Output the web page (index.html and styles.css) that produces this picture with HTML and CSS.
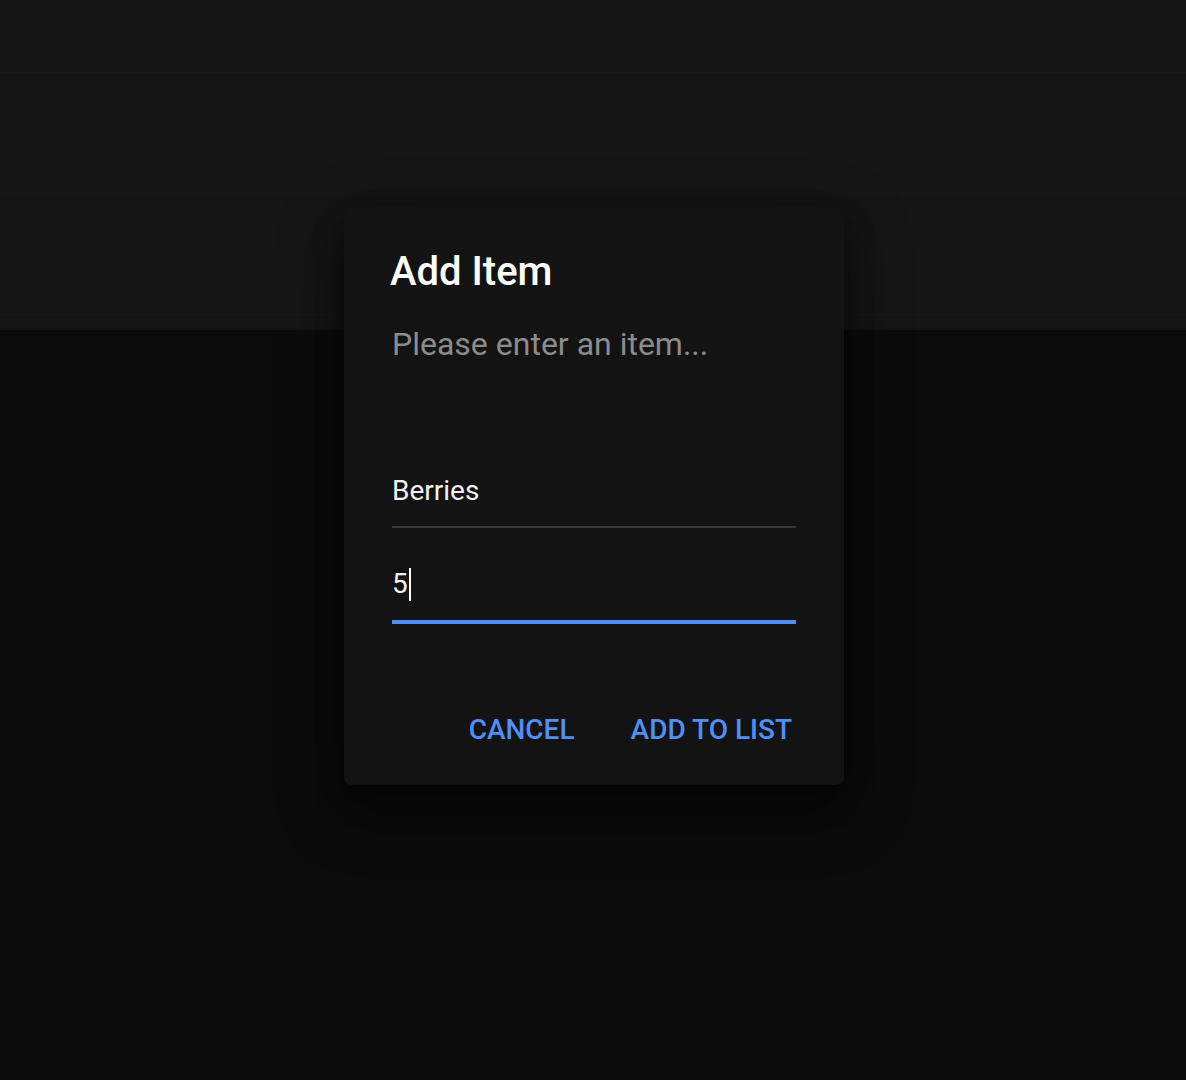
FILE: index.html
```html
<!DOCTYPE html>
<html lang="en">
<head>
<meta charset="utf-8">
<title>Add Item</title>
<link rel="stylesheet" href="styles.css">
</head>
<body>
<div class="page">
  <header class="top">
    <div class="bar"></div>
    <div class="row"></div>
    <div class="row"></div>
  </header>
  <main class="main"></main>
</div>
<div class="dialog" role="dialog">
  <h2 class="title">Add Item</h2>
  <p class="text">Please enter an item...</p>
  <div class="field">Berries</div>
  <div class="field focused">5<span class="caret"></span></div>
  <div class="actions">
    <button class="btn">CANCEL</button>
    <button class="btn">ADD TO LIST</button>
  </div>
</div>
</body>
</html>
```
FILE: styles.css
```css
html, body {
  margin: 0;
  padding: 0;
  background: #0b0b0b;
  font-family: Roboto, "Noto Sans", sans-serif;
}
.page {
  width: 1186px;
  height: 1080px;
  display: flex;
  flex-direction: column;
}
.top {
  height: 330px;
  background: #151515;
  display: flex;
  flex-direction: column;
}
.bar {
  height: 72px;
  border-bottom: 1px solid #191919;
}
.row {
  height: 120px;
  border-bottom: 1px solid #181818;
}
.main {
  flex: 1;
  background: #0b0b0b;
}
.dialog {
  position: absolute;
  left: 344px;
  top: 207px;
  width: 500px;
  height: 578px;
  box-sizing: border-box;
  padding: 33px 48px 0 48px;
  background: #131313;
  border-radius: 8px;
  box-shadow: 0 22px 60px 6px rgba(0, 0, 0, 0.45), 0 14px 30px rgba(0, 0, 0, 0.3);
  display: flex;
  flex-direction: column;
}
.title {
  margin: 0 0 0 -2px;
  font-size: 40px;
  font-weight: 500;
  line-height: 64px;
  color: #ffffff;
}
.text {
  margin: 16px 0 0 0;
  font-size: 32px;
  line-height: 48px;
  color: #8c8c8c;
}
.field {
  margin-top: 103px;
  font-size: 28px;
  line-height: 40px;
  color: #f2f2f2;
  padding-bottom: 15px;
  border-bottom: 2px solid #3a3a3a;
  display: flex;
  align-items: center;
}
.field.focused {
  margin-top: 36px;
  padding-bottom: 16px;
  border-bottom: 4px solid #4f8ff7;
}
.caret {
  display: inline-block;
  width: 2px;
  height: 33px;
  margin-left: 1px;
  background: #ffffff;
}
.actions {
  margin-top: 86px;
  margin-right: -12px;
  display: flex;
  justify-content: flex-end;
  gap: 24px;
}
.btn {
  background: none;
  border: none;
  padding: 0 16px;
  font-family: Roboto, "Noto Sans", sans-serif;
  font-size: 28px;
  font-weight: 500;
  line-height: 40px;
  color: #4f8ff7;
  cursor: pointer;
}
```
